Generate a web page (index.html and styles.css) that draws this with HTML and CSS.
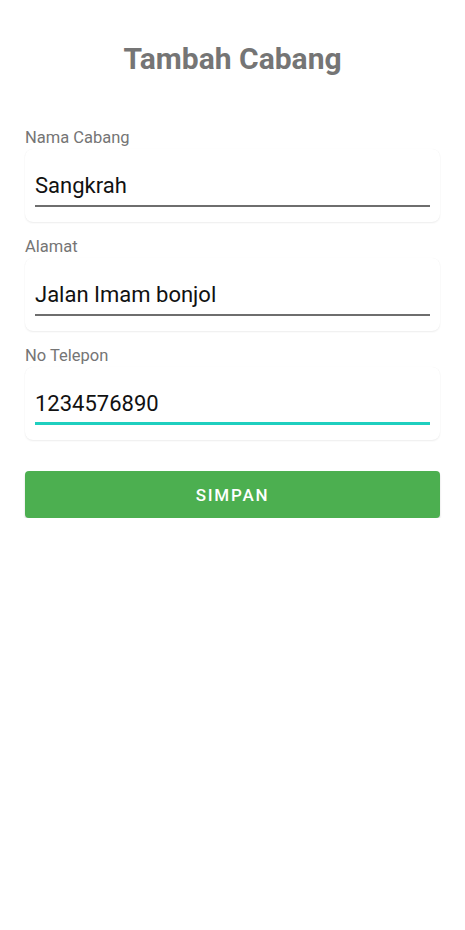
FILE: index.html
```html
<!DOCTYPE html>
<html lang="id">
<head>
<meta charset="utf-8">
<title>Tambah Cabang</title>
<link rel="stylesheet" href="styles.css">
</head>
<body>
<main class="page">
  <h1 class="title">Tambah Cabang</h1>
  <form class="form">
    <div class="field">
      <label class="label" for="nama">Nama Cabang</label>
      <div class="card">
        <input class="input" id="nama" type="text" value="Sangkrah">
      </div>
    </div>
    <div class="field">
      <label class="label" for="alamat">Alamat</label>
      <div class="card">
        <input class="input" id="alamat" type="text" value="Jalan Imam bonjol">
      </div>
    </div>
    <div class="field">
      <label class="label" for="telp">No Telepon</label>
      <div class="card">
        <input class="input input-focused" id="telp" type="text" value="1234576890">
      </div>
    </div>
    <button class="button" type="button">SIMPAN</button>
  </form>
</main>
</body>
</html>
```
FILE: styles.css
```css
html, body {
  margin: 0;
  padding: 0;
  background: #ffffff;
  font-family: Roboto, "Noto Sans", sans-serif;
}

.page {
  padding: 41px 25px 0 25px;
}

.title {
  margin: 0 0 51px 0;
  text-align: center;
  font-size: 30px;
  line-height: 36px;
  font-weight: 700;
  color: #757575;
}

.form {
  display: flex;
  flex-direction: column;
}

.field {
  display: flex;
  flex-direction: column;
  margin-bottom: 15px;
}

.label {
  display: block;
  font-size: 16.5px;
  line-height: 20px;
  color: #757575;
  margin-bottom: 1px;
}

.card {
  background: #ffffff;
  border-radius: 8px;
  padding: 22px 10px 15px 10px;
  box-shadow: 0 1px 2px rgba(0, 0, 0, 0.07), 0 0 1px rgba(0, 0, 0, 0.05);
}

.input {
  display: block;
  width: 100%;
  box-sizing: border-box;
  -webkit-appearance: none;
  appearance: none;
  border: none;
  border-bottom: 2px solid #6e6e6e;
  outline: none;
  padding: 0 0 6px 0;
  margin: 0;
  background: transparent;
  font-family: Roboto, "Noto Sans", sans-serif;
  font-size: 22px;
  line-height: 28px;
  height: 36px;
  color: #111111;
}

.input-focused {
  border-bottom: 3px solid #1fcfbf;
  padding-bottom: 5px;
}

.button {
  margin-top: 16px;
  height: 47px;
  border: none;
  border-radius: 4px;
  background: #4caf50;
  color: #ffffff;
  font-family: Roboto, "Noto Sans", sans-serif;
  font-size: 17px;
  font-weight: 500;
  letter-spacing: 1.8px;
  box-shadow: 0 2px 2px rgba(0, 0, 0, 0.18);
}
```
